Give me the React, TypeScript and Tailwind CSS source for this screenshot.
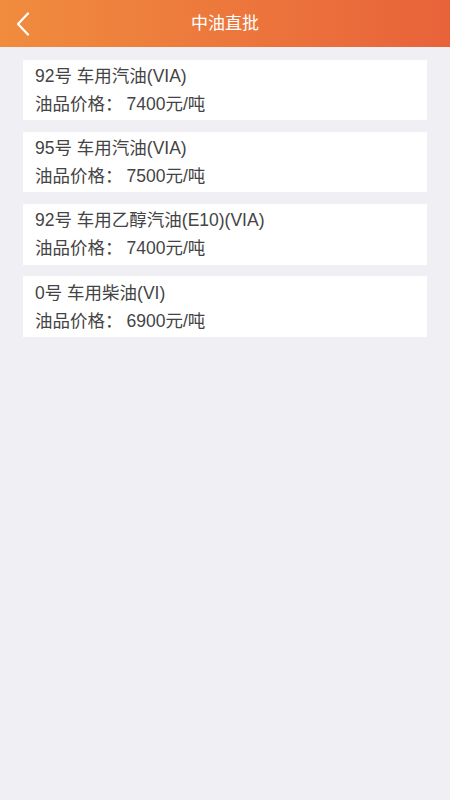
const ITEMS = [
  { name: "92号 车用汽油(VIA)", price: "7400" },
  { name: "95号 车用汽油(VIA)", price: "7500" },
  { name: "92号 车用乙醇汽油(E10)(VIA)", price: "7400" },
  { name: "0号 车用柴油(VI)", price: "6900" },
];

export default function App() {
  return (
    <div
      className="min-h-[800px] w-[450px] bg-[#efeff4]"
      style={{ fontFamily: '"Liberation Sans", "Noto Sans CJK SC", sans-serif' }}
    >
      {/* Header */}
      <div className="relative flex h-[47px] items-center justify-center bg-gradient-to-r from-[#f08c3e] to-[#e8623a]">
        <button className="absolute left-[15px] top-[12px] text-white">
          <svg width="16" height="24" viewBox="0 0 16 24" fill="none">
            <path d="M13 1.5 L3 12 L13 22.5" stroke="white" strokeWidth="2.2" strokeLinecap="round" strokeLinejoin="round" />
          </svg>
        </button>
        <h1 className="text-[17px] text-white">中油直批</h1>
      </div>

      {/* List */}
      <div className="flex flex-col gap-[11.8px] px-[23px] pt-[12.5px]">
        {ITEMS.map((it) => (
          <div key={it.name} className="flex h-[60.5px] flex-col justify-center bg-white px-[12px] text-[17.5px] leading-[28px] text-[#444]">
            <div>{it.name}</div>
            <div>
              油品价格：<span className="ml-[4px]">{it.price}元/吨</span>
            </div>
          </div>
        ))}
      </div>
    </div>
  );
}
